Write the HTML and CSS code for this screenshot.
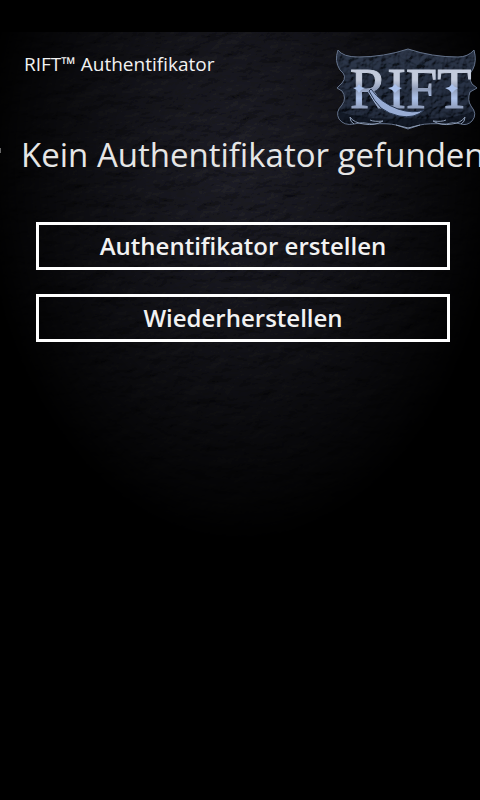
FILE: index.html
```
<!DOCTYPE html>
<html lang="de">
<head>
<meta charset="utf-8">
<meta name="viewport" content="width=device-width, initial-scale=1">
<title>RIFT™ Authentifikator</title>
<link rel="stylesheet" href="styles.css">
</head>
<body>
<div class="screen">
  <svg class="stone" aria-hidden="true" preserveAspectRatio="none">
    <filter id="rock" x="0" y="0" width="100%" height="100%">
      <feTurbulence type="fractalNoise" baseFrequency="0.04 0.07" numOctaves="5" seed="8" result="n"/>
      <feDiffuseLighting in="n" surfaceScale="3" diffuseConstant="1" lighting-color="#20242c">
        <feDistantLight azimuth="240" elevation="48"/>
      </feDiffuseLighting>
    </filter>
    <rect width="100%" height="100%" filter="url(#rock)"/>
  </svg>
  <header class="top">
    <p class="app-name">RIFT™ Authentifikator</p>
    <svg class="logo" viewBox="0 0 144 84" role="img" aria-label="RIFT">
      <defs>
        <linearGradient id="steel" x1="0" y1="0" x2="0" y2="1">
          <stop offset="0" stop-color="#c3cbdc"/>
          <stop offset=".35" stop-color="#c3cbdc"/>
          <stop offset=".5" stop-color="#8f9cb8"/>
          <stop offset=".65" stop-color="#adc2ea"/>
          <stop offset=".85" stop-color="#8793ae"/>
        </linearGradient>
        <linearGradient id="plate" x1="0" y1="0" x2="0" y2="1">
          <stop offset="0" stop-color="#222b3a"/>
          <stop offset=".5" stop-color="#151e2e"/>
          <stop offset="1" stop-color="#0b101a"/>
        </linearGradient>
        <clipPath id="shape"><path d="M4 2Q9 9 24 9Q50 9 74 1Q98 9 124 9Q134 9 140 2Q143 13 139 21Q133 28 138 36L143 40L136 44Q133 52 137 58Q144 66 138 73Q133 78 127 76Q119 73 112 76Q94 75 86 77L74 81L62 77Q54 75 38 76Q28 73 20 76Q10 78 5 71Q1 64 8 57Q13 50 8 43L3 40L8 35Q14 28 6 22Q0 13 4 2Z"/></clipPath>
        <filter id="grit" x="0" y="0" width="100%" height="100%">
          <feTurbulence type="fractalNoise" baseFrequency="0.16" numOctaves="3" seed="4"/>
          <feDiffuseLighting surfaceScale="4" diffuseConstant="1" lighting-color="#3c4961">
            <feDistantLight azimuth="235" elevation="38"/>
          </feDiffuseLighting>
        </filter>
      </defs>
      <g clip-path="url(#shape)">
        <rect width="144" height="84" fill="url(#plate)"/>
        <rect class="grit" width="144" height="84" filter="url(#grit)"/>
        <path class="shade" d="M0 62Q30 73 74 70Q118 73 144 62V84H0Z"/>
      </g>
      <path class="rim" d="M4 2Q9 9 24 9Q50 9 74 1Q98 9 124 9Q134 9 140 2Q143 13 139 21Q133 28 138 36L143 40L136 44Q133 52 137 58Q144 66 138 73Q133 78 127 76Q119 73 112 76Q94 75 86 77L74 81L62 77Q54 75 38 76Q28 73 20 76Q10 78 5 71Q1 64 8 57Q13 50 8 43L3 40L8 35Q14 28 6 22Q0 13 4 2Z"/>
      <path class="claw" d="M20 76Q16 74 16 69Q20 75 30 76Q41 78 49 73Q40 74 36 72M127 76Q131 74 131 69Q127 75 118 76Q107 78 99 73Q108 74 112 72M62 77L74 80L86 77"/>
      <text class="wordmark" x="16" y="60">RIFT</text>
      <path class="blade" d="M37 41Q47 55 64 61Q79 66 90 62Q81 71 65 68Q55 66 47 60Q40 53 35 43Z"/>
      <path class="spark" d="M19 40L23 39L25 36L27 39L31 40L27 42L25 45L23 42ZM54 40L58 39L61 36L64 39L68 40L64 42L61 45L58 42ZM111 40L115 39L118 36L121 39L124 40L121 42L118 45L115 42Z"/>
    </svg>
  </header>
  <main>
    <h1 class="title">Kein Authentifikator gefunden</h1>
    <div class="actions">
      <button class="action" type="button">Authentifikator erstellen</button>
      <button class="action" type="button">Wiederherstellen</button>
    </div>
  </main>
</div>
</body>
</html>
```
FILE: styles.css
```
* { box-sizing: border-box; }

body {
  margin: 0;
  background: #000;
  color: #f2f2f2;
  font-family: "Open Sans", "Noto Sans", sans-serif;
}

.screen {
  position: relative;
  min-height: 100vh;
  padding-top: 32px;
  overflow: hidden;
}

.stone {
  position: absolute;
  top: 32px;
  left: 0;
  z-index: -1;
  width: 100%;
  height: 520px;
  -webkit-mask-image: radial-gradient(ellipse 54% 72% at 50% 26%, #000 0%, rgba(0,0,0,.75) 35%, rgba(0,0,0,.42) 65%, transparent 100%);
  mask-image: radial-gradient(ellipse 54% 72% at 50% 26%, #000 0%, rgba(0,0,0,.75) 35%, rgba(0,0,0,.42) 65%, transparent 100%);
}

.top {
  display: flex;
  justify-content: space-between;
  align-items: flex-start;
  height: 100px;
  padding: 16px 2px 0 24px;
}

.app-name {
  margin: 0;
  font-size: 19px;
  line-height: 32px;
}

.logo {
  width: 144px;
  height: 84px;
}

.grit { opacity: .5; }
.shade { fill: #080d17; opacity: .6; }
.rim { fill: none; stroke: #64728a; stroke-width: 1; }
.claw { fill: none; stroke: #8d9cb5; stroke-width: 1; }

.wordmark {
  font-family: "Liberation Serif", serif;
  font-size: 56px;
  fill: url(#steel);
  stroke: url(#steel);
  stroke-width: 1;
}

.blade { fill: #98acd4; stroke: #28364f; stroke-width: 1; }
.spark { fill: #a9c0ea; }

.title {
  position: relative;
  margin: 0;
  padding-left: 21px;
  color: #e6e6e6;
  font-size: 33px;
  font-weight: 400;
  line-height: 46px;
  white-space: nowrap;
}

/* Edge of the neighbouring panorama page */
.title::before {
  content: "";
  position: absolute;
  top: 16px;
  left: 0;
  width: 1px;
  height: 5px;
  background: #666;
}

.actions {
  display: grid;
  gap: 24px;
  padding: 44px 30px 0 36px;
}

.action {
  height: 48px;
  padding: 0;
  border: 3px solid #fff;
  background: transparent;
  color: #f2f2f2;
  font-family: inherit;
  font-size: 24px;
  font-weight: 600;
  line-height: 32px;
}
```
